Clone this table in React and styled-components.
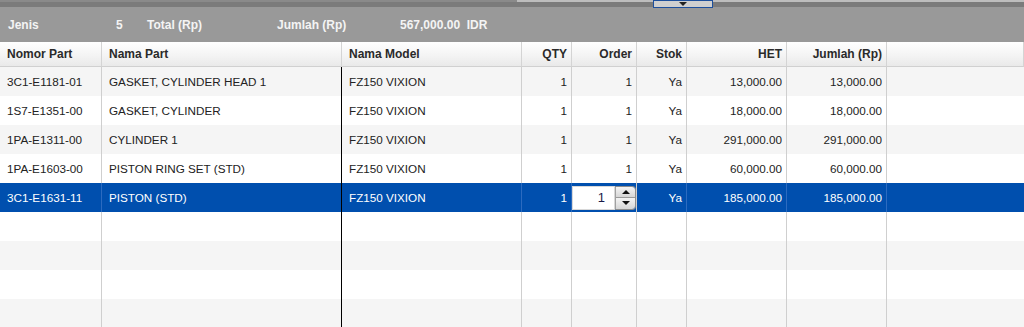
import React from "react";
import styled, { createGlobalStyle } from "styled-components";

const Global = createGlobalStyle`
  html, body { margin: 0; padding: 0; background: #fff; overflow: hidden; }
  body { font-family: "Liberation Sans", Arial, sans-serif; }
`;

const Page = styled.div`
  width: 1024px;
  height: 327px;
  display: flex;
  flex-direction: column;
  overflow: hidden;
`;

const Splitter = styled.div`
  flex: 0 0 7px;
  height: 7px;
  background: #7b7b7b;
  border-top: 2px solid #bdbdbd;
  box-sizing: border-box;
  position: relative;
`;

const SplitterEdge = styled.div`
  position: absolute;
  left: 0;
  top: -2px;
  width: 517px;
  height: 2px;
  background: #8a8a8a;
`;

const Handle = styled.button`
  position: absolute;
  left: 653px;
  top: -2px;
  width: 60px;
  height: 8px;
  padding: 0;
  border: 1px solid #1d4f9c;
  background: #cfcfcf;
  display: flex;
  align-items: center;
  justify-content: center;
  &::after {
    content: "";
    border-left: 4px solid transparent;
    border-right: 4px solid transparent;
    border-top: 4px solid #222;
  }
`;

const Summary = styled.div`
  flex: 0 0 35px;
  height: 35px;
  background: #999999;
  display: grid;
  grid-template-columns: 108px 31px 130px 123px auto;
  align-items: center;
  padding: 0 0 0 8px;
  box-sizing: border-box;
  font-size: 12px;
  font-weight: bold;
  color: #f4f4f4;
`;

const SumItem = styled.span`
  white-space: pre;
`;

const Grid = styled.div`
  flex: 0 0 auto;
  display: grid;
  grid-template-columns: 102px 240px 180px 50px 65px 50px 100px 100px 1fr;
  grid-template-rows: 25px;
  grid-auto-rows: 29px;
  font-size: 11.7px;
  color: #222;
`;

const Head = styled.div`
  background: linear-gradient(#ffffff, #f3f3f3 60%, #e9e9e9);
  border-right: 1px solid #d4d4d4;
  border-bottom: 1px solid #d0d0d0;
  font-size: 12px;
  font-weight: bold;
  color: #2a2a2a;
  display: flex;
  align-items: center;
  justify-content: ${(p) => (p.$right ? "flex-end" : "flex-start")};
  padding: 0 ${(p) => (p.$right ? "4px" : "6px")} 0 ${(p) => (p.$right ? "0" : "7px")};
  white-space: nowrap;
  overflow: hidden;
`;

const Cell = styled.div`
  background: ${(p) => (p.$selected ? "#004fae" : p.$odd ? "#f5f5f5" : "#ffffff")};
  color: ${(p) => (p.$selected ? "#ffffff" : "#222")};
  border-right: 1px solid ${(p) => (p.$dark ? "#000" : p.$selected ? "#2c6bc0" : "#cfcfcf")};
  display: flex;
  align-items: center;
  justify-content: ${(p) => (p.$right ? "flex-end" : "flex-start")};
  padding: 0 ${(p) => (p.$right ? "4px" : "6px")} 0 ${(p) => (p.$right ? "0" : "7px")};
  white-space: nowrap;
  overflow: hidden;
  ${(p) => p.$last && "border-right: none;"}
`;

const EditCell = styled.div`
  background: #004fae;
  border-right: 1px solid #cfcfcf;
  display: flex;
  align-items: center;
`;

const Spinner = styled.div`
  display: flex;
  width: 64px;
  height: 24px;
`;

const SpinInput = styled.div`
  flex: 1;
  background: #fff;
  border: 1px solid #d8d8d8;
  color: #1a1a4a;
  display: flex;
  align-items: center;
  justify-content: flex-end;
  padding-right: 9px;
  font-size: 13px;
`;

const SpinButtons = styled.div`
  width: 19px;
  display: flex;
  flex-direction: column;
  border: 1px solid #8c8c8c;
  border-left-color: #a0a0a0;
  border-radius: 0 4px 4px 0;
  overflow: hidden;
`;

const SpinBtn = styled.div`
  flex: 1;
  background: linear-gradient(#f4f4f4, #d6d6d6);
  display: flex;
  align-items: center;
  justify-content: center;
  & + & { border-top: 1px solid #9a9a9a; }
  &::after {
    content: "";
    border-left: 4px solid transparent;
    border-right: 4px solid transparent;
    ${(p) => (p.$up ? "border-bottom: 4px solid #111;" : "border-top: 4px solid #111;")}
  }
`;

const columns = [
  { key: "no", label: "Nomor Part" },
  { key: "name", label: "Nama Part" },
  { key: "model", label: "Nama Model" },
  { key: "qty", label: "QTY", right: true },
  { key: "order", label: "Order", right: true },
  { key: "stok", label: "Stok", right: true },
  { key: "het", label: "HET", right: true },
  { key: "jml", label: "Jumlah (Rp)", right: true },
];

const rows = [
  { no: "3C1-E1181-01", name: "GASKET, CYLINDER HEAD 1", model: "FZ150 VIXION", qty: "1", order: "1", stok: "Ya", het: "13,000.00", jml: "13,000.00" },
  { no: "1S7-E1351-00", name: "GASKET, CYLINDER", model: "FZ150 VIXION", qty: "1", order: "1", stok: "Ya", het: "18,000.00", jml: "18,000.00" },
  { no: "1PA-E1311-00", name: "CYLINDER 1", model: "FZ150 VIXION", qty: "1", order: "1", stok: "Ya", het: "291,000.00", jml: "291,000.00" },
  { no: "1PA-E1603-00", name: "PISTON RING SET (STD)", model: "FZ150 VIXION", qty: "1", order: "1", stok: "Ya", het: "60,000.00", jml: "60,000.00" },
  { no: "3C1-E1631-11", name: "PISTON (STD)", model: "FZ150 VIXION", qty: "1", order: "1", stok: "Ya", het: "185,000.00", jml: "185,000.00" },
];

const SELECTED = 4;
const EMPTY_ROWS = 4;

export default function App() {
  const body = [];
  rows.forEach((r, i) => {
    const sel = i === SELECTED;
    const odd = i % 2 === 0;
    columns.forEach((c) => {
      if (sel && c.key === "order") {
        body.push(
          <EditCell key={`${i}-${c.key}`}>
            <Spinner>
              <SpinInput>{r.order}</SpinInput>
              <SpinButtons>
                <SpinBtn $up />
                <SpinBtn />
              </SpinButtons>
            </Spinner>
          </EditCell>
        );
        return;
      }
      body.push(
        <Cell key={`${i}-${c.key}`} $right={c.right} $odd={odd} $selected={sel} $dark={c.key === "name"}>
          {r[c.key]}
        </Cell>
      );
    });
    body.push(<Cell key={`${i}-fill`} $odd={odd} $selected={sel} $last />);
  });
  for (let e = 0; e < EMPTY_ROWS; e++) {
    const i = rows.length + e;
    const odd = i % 2 === 0;
    columns.forEach((c) => {
      body.push(<Cell key={`${i}-${c.key}`} $odd={odd} $dark={c.key === "name"} />);
    });
    body.push(<Cell key={`${i}-fill`} $odd={odd} $last />);
  }

  return (
    <Page>
      <Global />
      <Splitter>
        <SplitterEdge />
        <Handle aria-label="collapse" />
      </Splitter>
      <Summary>
        <SumItem>Jenis</SumItem>
        <SumItem>5</SumItem>
        <SumItem>Total (Rp)</SumItem>
        <SumItem>Jumlah (Rp)</SumItem>
        <SumItem>567,000.00  IDR</SumItem>
      </Summary>
      <Grid>
        {columns.map((c) => (
          <Head key={c.key} $right={c.right}>
            {c.label}
          </Head>
        ))}
        <Head />
        {body}
      </Grid>
    </Page>
  );
}
